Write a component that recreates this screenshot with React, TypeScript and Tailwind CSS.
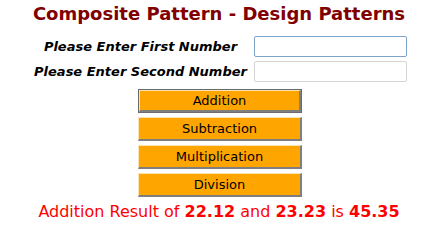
const buttons = ['Addition', 'Subtraction', 'Multiplication', 'Division'];

const face =
  'block w-full border-t border-l border-r-2 border-b-2 border-t-[#fbe3b3] border-l-[#fbe3b3] border-r-[#7f7f7f] border-b-[#7f7f7f] bg-[#ffa500] text-[13px] leading-none text-black';

function OpButton({ label, active }: { label: string; active?: boolean }) {
  if (active) {
    return (
      <div className="w-[164px] border border-[#6b6b6b]">
        <button type="button" className={`${face} h-[22px]`}>
          {label}
        </button>
      </div>
    );
  }
  return (
    <div className="w-[164px]">
      <button type="button" className={`${face} h-[24px]`}>
        {label}
      </button>
    </div>
  );
}

export default function App() {
  return (
    <div className="flex flex-col items-center pt-[2px] font-['DejaVu_Sans',Verdana,sans-serif]">
      <h1 className="text-[18px] font-bold leading-[24px] text-[#800000]">
        Composite Pattern - Design Patterns
      </h1>
      <table className="mt-[6px] border-separate border-spacing-y-[4px]">
        <tbody>
          <tr>
            <td className="w-[218px] text-center text-[13px] font-bold italic text-black">
              Please Enter First Number
            </td>
            <td className="pl-[4px]">
              <input className="block h-[21px] w-[153px] rounded-[2px] border border-[#7ea3c9] bg-white" />
            </td>
          </tr>
          <tr>
            <td className="text-center text-[13px] font-bold italic text-black">
              Please Enter Second Number
            </td>
            <td className="pl-[4px]">
              <input className="block h-[21px] w-[153px] rounded-[2px] border border-[#d4d4d4] bg-white" />
            </td>
          </tr>
        </tbody>
      </table>
      <div className="mt-[3px] flex flex-col items-center gap-[4px] pl-[2px]">
        {buttons.map((b, i) => (
          <OpButton key={b} label={b} active={i === 0} />
        ))}
      </div>
      <p className="mt-[5px] text-[16px] leading-[20px] text-[#ff0000]">
        Addition Result of <b>22.12</b> and <b>23.23</b> is <b>45.35</b>
      </p>
    </div>
  );
}
